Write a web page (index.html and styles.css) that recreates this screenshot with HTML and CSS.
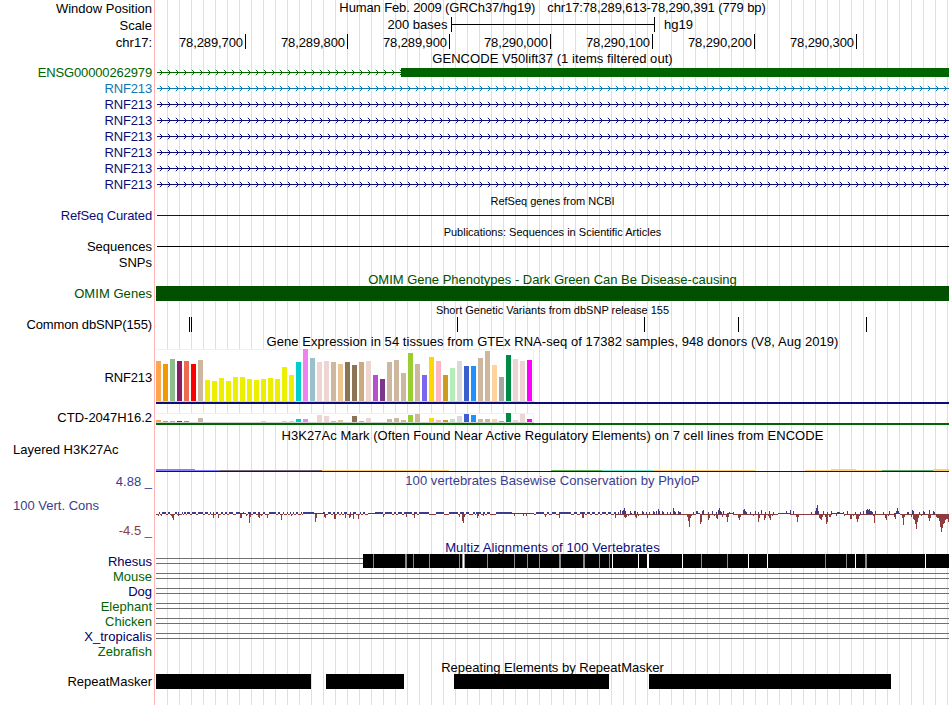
FILE: index.html
```html
<!DOCTYPE html>
<html lang="en">

<head>
  <meta charset="UTF-8">
  <meta name="viewport" content="width=device-width, initial-scale=1.0">
  <title>chr17:78,289,613-78,290,391</title>
  <link rel="stylesheet" href="styles.css">
</head>

<body>

  <svg class="defs">
    <defs>
      <pattern id="arrowGreen" class="green" width="8" height="16" patternUnits="userSpaceOnUse"><path class="arrow" d="M3.8 5.8l2.7 2.7l-2.7 2.7" /></pattern>
      <pattern id="arrowBlue" class="blue" width="8" height="16" patternUnits="userSpaceOnUse"><path class="arrow" d="M3.8 5.8l2.7 2.7l-2.7 2.7" /></pattern>
      <pattern id="arrowNavy" class="navy" width="8" height="16" patternUnits="userSpaceOnUse"><path class="arrow" d="M3.8 5.8l2.7 2.7l-2.7 2.7" /></pattern>
    </defs>
  </svg>

  <div class="browser">

    <!-- Position, scale and ruler -->
    <div class="row h17">
      <div class="label">Window Position</div>
      <div class="title position"><span>Human Feb. 2009 (GRCh37/hg19)</span><span>chr17:78,289,613-78,290,391 (779 bp)</span></div>
    </div>
    <div class="row h17">
      <div class="label">Scale</div>
      <svg class="plot" height="17">
        <text x="291.5" y="12" text-anchor="end">200 bases</text>
        <path class="line" d="M295.5 0v15M295 7.5h204M498.5 0v15" />
        <text x="508" y="12">hg19</text>
      </svg>
    </div>
    <div class="row h17">
      <div class="label">chr17:</div>
      <svg class="plot" height="17" id="ruler"></svg>
    </div>

    <!-- GENCODE -->
    <div class="title gencode">GENCODE V50lift37 (1 items filtered out)</div>
    <div class="row h16 green">
      <div class="label tight">ENSG00000262979</div>
      <svg class="plot" height="16">
        <path class="line" d="M1 8.5h245" />
        <rect width="245" height="16" fill="url(#arrowGreen)" />
        <rect class="fill" x="245" y="4" width="548" height="9" />
      </svg>
    </div>
    <div class="row h16 blue">
      <div class="label tight">RNF213</div>
      <svg class="plot" height="16"><path class="line" d="M1 8.5h792" /><rect width="793" height="16" fill="url(#arrowBlue)" /></svg>
    </div>
    <div class="row h16 navy">
      <div class="label tight">RNF213</div>
      <svg class="plot" height="16"><path class="line" d="M1 8.5h792" /><rect width="793" height="16" fill="url(#arrowNavy)" /></svg>
    </div>
    <div class="row h16 navy">
      <div class="label tight">RNF213</div>
      <svg class="plot" height="16"><path class="line" d="M1 8.5h792" /><rect width="793" height="16" fill="url(#arrowNavy)" /></svg>
    </div>
    <div class="row h16 navy">
      <div class="label tight">RNF213</div>
      <svg class="plot" height="16"><path class="line" d="M1 8.5h792" /><rect width="793" height="16" fill="url(#arrowNavy)" /></svg>
    </div>
    <div class="row h16 navy">
      <div class="label tight">RNF213</div>
      <svg class="plot" height="16"><path class="line" d="M1 8.5h792" /><rect width="793" height="16" fill="url(#arrowNavy)" /></svg>
    </div>
    <div class="row h16 navy">
      <div class="label tight">RNF213</div>
      <svg class="plot" height="16"><path class="line" d="M1 8.5h792" /><rect width="793" height="16" fill="url(#arrowNavy)" /></svg>
    </div>
    <div class="row h16 navy">
      <div class="label tight">RNF213</div>
      <svg class="plot" height="16"><path class="line" d="M1 8.5h792" /><rect width="793" height="16" fill="url(#arrowNavy)" /></svg>
    </div>

    <!-- RefSeq, publications, OMIM, dbSNP -->
    <div class="title small h16">RefSeq genes from NCBI</div>
    <div class="row h15 navy">
      <div class="label tight">RefSeq Curated</div>
      <svg class="plot" height="15"><path class="line" d="M1 7.5h792" /></svg>
    </div>
    <div class="title small h16">Publications: Sequences in Scientific Articles</div>
    <div class="row h15">
      <div class="label">Sequences</div>
      <svg class="plot" height="15"><path class="line" d="M1 7.5h792" /></svg>
    </div>
    <div class="row h16">
      <div class="label">SNPs</div>
    </div>
    <div class="title omim h16 low">OMIM Gene Phenotypes - Dark Green Can Be Disease-causing</div>
    <div class="row h15 omim">
      <div class="label wide">OMIM Genes</div>
      <svg class="plot" height="15"><rect class="fill" width="793" height="15" /></svg>
    </div>
    <div class="title small h16">Short Genetic Variants from dbSNP release 155</div>
    <div class="row h15">
      <div class="label tight">Common dbSNP(155)</div>
      <svg class="plot" height="15"><path class="line" d="M33.5 0v15M35.5 0v15M301.5 0v15M488.5 0v15M582.5 0v15M710.5 0v15" /></svg>
    </div>

    <!-- GTEx -->
    <div class="title h17 low wide">Gene Expression in 54 tissues from GTEx RNA-seq of 17382 samples, 948 donors (V8, Aug 2019)</div>
    <div class="row gtex">
      <div class="label tight">RNF213</div>
      <svg class="plot" height="55" id="gtexRnf"></svg>
    </div>
    <div class="row gtex-low">
      <div class="label">CTD-2047H16.2</div>
      <svg class="plot" height="12" id="gtexCtd"></svg>
    </div>

    <!-- H3K27Ac -->
    <div class="title h3k-title wide">H3K27Ac Mark (Often Found Near Active Regulatory Elements) on 7 cell lines from ENCODE</div>
    <div class="row h3k">
      <div class="label left">Layered H3K27Ac</div>
      <svg class="plot" height="30" id="h3k"></svg>
    </div>

    <!-- Conservation -->
    <div class="row h16 cons">
      <div class="label">4.88 _</div>
      <div class="title low wide">100 vertebrates Basewise Conservation by PhyloP</div>
    </div>
    <div class="row phylop cons">
      <div class="side">
        <div class="label left">100 Vert. Cons</div>
        <div class="label minimum">-4.5 _</div>
      </div>
      <svg class="plot" height="51" id="phylop"></svg>
    </div>
    <div class="title h14 navy multiz-title">Multiz Alignments of 100 Vertebrates</div>
    <div class="row h15 multiz">
      <div class="label">Rhesus</div>
      <svg class="plot" height="15" id="rhesus"></svg>
    </div>
    <div class="row h15 multiz alt">
      <div class="label">Mouse</div>
      <svg class="plot" height="15"><path class="gap" d="M0 4.5h793M0 9.5h793" /></svg>
    </div>
    <div class="row h15 multiz">
      <div class="label">Dog</div>
      <svg class="plot" height="15"><path class="gap" d="M0 4.5h793M0 9.5h793" /></svg>
    </div>
    <div class="row h15 multiz alt">
      <div class="label">Elephant</div>
      <svg class="plot" height="15"><path class="gap" d="M0 4.5h793M0 9.5h793" /></svg>
    </div>
    <div class="row h15 multiz alt">
      <div class="label">Chicken</div>
      <svg class="plot" height="15"><path class="gap" d="M0 4.5h793M0 9.5h793" /></svg>
    </div>
    <div class="row h15 multiz">
      <div class="label wide">X_tropicalis</div>
      <svg class="plot" height="15"><path class="gap" d="M0 4.5h793M0 9.5h793" /></svg>
    </div>
    <div class="row h15 multiz alt">
      <div class="label">Zebrafish</div>
    </div>

    <!-- RepeatMasker -->
    <div class="title h15">Repeating Elements by RepeatMasker</div>
    <div class="row h15">
      <div class="label">RepeatMasker</div>
      <svg class="plot" height="15"><path d="M0 0h155v15H0zM170 0h78v15h-78zM298 0h155v15h-155zM493 0h242v15H493z" /></svg>
    </div>
  </div>

  <script src="script.js"></script>
</body>

</html>
```

FILE: styles.css
```css
body {
  margin: 0;
  background: #fff;
  font-family: "Liberation Sans", Arial, sans-serif;
  font-size: 13px;
  color: #000;
}

.defs {
  display: block;
  width: 0;
  height: 0;
}

/* label column, red divider, then a guide line every 12px */
.browser {
  width: 949px;
  height: 705px;
  overflow: hidden;
  background:
    linear-gradient(to right, #fff 154px, #ffb4b4 154px, #ffb4b4 155px, #fff 155px) 0 0 / 156px 100% no-repeat,
    repeating-linear-gradient(to right, transparent 0, transparent 11px, #dcdcf8 11px, #dcdcf8 12px);
}

.row {
  display: flex;
  align-items: center;
}

.label {
  flex: none;
  box-sizing: border-box;
  width: 156px;
  padding-right: 4px;
  text-align: right;
  line-height: 15px;
  white-space: pre;
}

.label.left {
  padding-left: 13px;
  text-align: left;
}

.plot {
  display: block;
  flex: none;
  width: 793px;
  shape-rendering: crispEdges;
}

.plot text {
  fill: #000;
}

.title {
  margin-left: 156px;
  width: 793px;
  text-align: center;
  white-space: pre;
}

.row .title {
  margin-left: 0;
}

.position {
  display: flex;
  justify-content: center;
  gap: 12px;
  line-height: 15px;
  padding-bottom: 2px;
  box-sizing: border-box;
  letter-spacing: -0.12px;
}

.small {
  font-size: 11px;
}

.tight {
  letter-spacing: -0.14px;
}

.wide {
  letter-spacing: 0.05px;
}

#ruler {
  letter-spacing: -0.1px;
}

.h14 { height: 14px; line-height: 15px; }
.h15 { height: 15px; line-height: 17px; }
.h16 { height: 16px; line-height: 18px; }
.h17 { height: 17px; line-height: 18px; }

.low { line-height: 20px; }

.gencode {
  height: 13px;
  line-height: 16px;
  letter-spacing: 0.05px;
}

.green { color: #006400; }
.blue { color: #0c78b4; }
.navy { color: #0c0c78; }
.omim { color: #005000; }
.cons { color: #3c3c8c; }
.multiz { color: #000064; }
.alt { color: #006400; }

.line {
  fill: none;
  stroke: currentColor;
}

.fill {
  fill: currentColor;
}

.arrow {
  fill: none;
  stroke: currentColor;
  shape-rendering: auto;
}

.gap {
  fill: none;
  stroke: #707070;
}

.gtex {
  height: 55px;
}

.gtex .label {
  padding-top: 2px;
}

.gtex-low {
  height: 12px;
  margin-top: 9px;
}

.gtex-low .label {
  padding-bottom: 4px;
}

.h3k-title {
  margin-top: 4px;
  height: 14px;
  line-height: 13px;
}

.h3k {
  height: 30px;
  align-items: flex-start;
}

.h3k .label {
  line-height: 13px;
}

.phylop {
  height: 51px;
  align-items: flex-start;
}

.side {
  width: 156px;
  padding-top: 9px;
}

.minimum {
  margin-top: 10px;
  color: #8c3c3c;
}

.multiz-title {
  letter-spacing: 0.1px;
}
```

FILE: script.js
```js
const NS = 'http://www.w3.org/2000/svg';

function draw(id, tag, attrs, text) {
  const el = document.createElementNS(NS, tag);
  for (const key in attrs) el.setAttribute(key, attrs[key]);
  if (text) el.textContent = text;
  document.getElementById(id).appendChild(el);
}

function box(id, x, y, width, height, fill) {
  draw(id, 'rect', { x, y, width, height, fill });
}

// Ruler
const ticks = [[89, '78,289,700'], [191, '78,289,800'], [293, '78,289,900'], [394, '78,290,000'],
  [496, '78,290,100'], [598, '78,290,200'], [700, '78,290,300']];
ticks.forEach(([x, name]) => {
  draw('ruler', 'text', { x: x - 2, y: 13, 'text-anchor': 'end' }, name);
  box('ruler', x, 0, 1, 15, '#000');
});

// GTEx tissues
const tissueColors = ['#ffa54f', '#ee9a00', '#8fbc8f', '#8b1c62', '#ee6a50', '#ff0000', '#cdb79e']
  .concat(Array(13).fill('#eeee00'))
  .concat(['#00cdcd', '#ee82ee', '#9ac0cd', '#eed5d2', '#eed5d2', '#cdb79e', '#eec591', '#8b7355', '#8b7355',
    '#cdaa7d', '#eed5d2', '#b452cd', '#7a378b', '#cdb79e', '#cdb79e', '#cdb79e', '#9acd32', '#cdb79e',
    '#7a67ee', '#ffd700', '#ffb6c1', '#cd9b1d', '#b4eeb4', '#d9d9d9', '#3a5fcd', '#1e90ff', '#cdb79e',
    '#cdb79e', '#ffd39b', '#a6a6a6', '#008b45', '#eed5d2', '#eed5d2', '#ff00ff']);

const rnf = [40, 37, 42, 40, 40, 37, 41, 21, 20, 23, 20, 24, 24, 22, 21, 22, 23, 22, 34, 26, 39, 52, 43, 39, 40, 39, 37,
  39, 36, 39, 40, 26, 22, 39, 41, 28, 48, 37, 26, 44, 40, 26, 33, 40, 35, 35, 43, 50, 36, 24, 46, 42, 40, 41];
const ctd = [2, 1, 1, 1, 1, 0, 4, 0, 0, 0, 0, 0, 0, 0, 0, 1, 0, 0, 1, 1, 3, 3, 0, 7, 6, 1, 2,
  0, 6, 1, 4, 0, 0, 3, 4, 2, 7, 8, 0, 4, 2, 2, 3, 6, 8, 7, 3, 3, 3, 1, 9, 2, 8, 3];

function drawExpression(id, values, base, lineColor) {
  box(id, 0, 0, 378, base, '#f0f0f0');
  box(id, 0, 1, 377, base - 1, '#fff');
  box(id, 0, base, 378, 1, '#d0d0d0');
  values.forEach((v, i) => box(id, i * 7, base - v, 5, v, tissueColors[i]));
  box(id, 0, base + 1, 793, 2, lineColor);
}

drawExpression('gtexRnf', rnf, 52, '#0c0c78');
drawExpression('gtexCtd', ctd, 9, '#006400');

// H3K27Ac: x, width, height, color
const marks = [[0, 39, 2, '#8080ff'], [39, 25, 1, '#8080ff'], [64, 102, 1, '#806878'], [166, 127, 1, '#ffce70'],
  [395, 51, 1, '#68b858'], [446, 51, 1, '#70e8d0'], [497, 102, 1, '#ffce70'], [649, 26, 1, '#ffce70'],
  [675, 25, 2, '#ffce70'], [700, 26, 1, '#ffce70'], [726, 51, 1, '#68a878'], [777, 16, 2, '#ffce70']];
marks.forEach(([x, w, h, color]) => box('h3k', x, 25 - h, w, h, color));
box('h3k', 0, 25, 793, 1, '#141438');
document.getElementById('h3k').setAttribute('viewBox', '0 -3 793 30');

// PhyloP: positive runs (start, width) above the axis, everything else is slightly negative
const runs = [[3, 1], [6, 4], [12, 2], [19, 2], [22, 1], [26, 1], [28, 2], [31, 3], [36, 4], [42, 5], [49, 3], [54, 1],
  [57, 1], [60, 2], [65, 2], [69, 2], [73, 4], [80, 4], [87, 1], [92, 3], [97, 3], [102, 2], [107, 2], [113, 7],
  [122, 2], [127, 1], [131, 1], [134, 1], [137, 1], [140, 2], [145, 1], [147, 11], [167, 2], [172, 3], [177, 2],
  [181, 2], [185, 1], [188, 3], [194, 1], [197, 3], [204, 1], [207, 2], [219, 8], [229, 7], [238, 2], [242, 4],
  [248, 8], [258, 3], [263, 10], [280, 8], [293, 9], [304, 4], [310, 3], [317, 2], [320, 5], [327, 2], [331, 3],
  [340, 16], [380, 8], [391, 2], [396, 4], [403, 12], [418, 3], [424, 5], [431, 3], [436, 3], [442, 2], [446, 4],
  [452, 3], [458, 2]];
const thinRuns = [[84, 6], [158, 9], [212, 7], [356, 22], [540, 4], [571, 6], [622, 12], [676, 12], [738, 6]];
const up = [[462, 2], [464, 4], [466, 3], [467, 4], [468, 6], [469, 3], [474, 3], [475, 1], [478, 3], [479, 3], [481, 2],
  [486, 3], [487, 2], [490, 2], [493, 2], [497, 3], [498, 2], [500, 3], [502, 5], [503, 3], [506, 3], [507, 2],
  [511, 2], [514, 2], [517, 6], [518, 3], [519, 2], [522, 3], [523, 2], [524, 2], [537, 2], [540, 3], [541, 3],
  [546, 3], [547, 4], [552, 2], [556, 3], [560, 2], [562, 4], [563, 6], [564, 3], [565, 2], [567, 3], [573, 2],
  [577, 2], [587, 4], [588, 5], [589, 3], [590, 2], [594, 2], [599, 3], [602, 2], [605, 4], [609, 2], [613, 3],
  [617, 2], [630, 3], [634, 4], [637, 3], [655, 2], [659, 3], [660, 6], [661, 9], [662, 3], [667, 3], [671, 2],
  [675, 3], [681, 2], [682, 2], [683, 2], [687, 2], [691, 3], [699, 2], [704, 2], [707, 3], [710, 4], [711, 5],
  [712, 4], [713, 5], [714, 3], [715, 3], [716, 2], [719, 3], [727, 2], [733, 3], [740, 3], [741, 6], [742, 3],
  [751, 2], [752, 2], [756, 4], [757, 3], [763, 2], [767, 3], [768, 2], [773, 4], [777, 3], [778, 2]];
const down = [[2, 2], [5, 2], [15, 2], [16, 4], [17, 6], [22, 2], [57, 4], [62, 4], [84, 4], [85, 4], [90, 2], [93, 9],
  [94, 3], [102, 3], [103, 4], [105, 2], [111, 4], [125, 6], [135, 2], [159, 8], [160, 4], [168, 3], [169, 4],
  [178, 5], [179, 5], [189, 4], [193, 4], [194, 3], [197, 5], [202, 5], [227, 3], [250, 3], [258, 4], [303, 3],
  [306, 7], [307, 9], [308, 3], [321, 4], [322, 2], [327, 2], [358, 2], [367, 2], [370, 2], [389, 3], [403, 4],
  [426, 4], [427, 4], [459, 4], [468, 3], [469, 4], [470, 3], [472, 2], [479, 3], [480, 4], [482, 2], [491, 4],
  [531, 3], [532, 7], [533, 13], [534, 4], [535, 2], [544, 10], [545, 8], [552, 6], [553, 4], [558, 2],
  [560, 4], [561, 5], [566, 3], [570, 3], [571, 8], [572, 3], [582, 4], [583, 6], [584, 3], [597, 2], [602, 8],
  [603, 4], [608, 6], [609, 4], [612, 2], [613, 4], [614, 6], [616, 2], [640, 3], [641, 8], [642, 3],
  [663, 4], [664, 5], [665, 6], [666, 3], [669, 3], [670, 10], [671, 8], [673, 3], [674, 3], [680, 2], [688, 2],
  [694, 5], [695, 5], [697, 2], [700, 5], [701, 8], [702, 5], [703, 2], [717, 2], [718, 9], [729, 4], [730, 6],
  [732, 2], [738, 3], [739, 5], [746, 4], [747, 11], [748, 3], [755, 3], [757, 5], [758, 6], [759, 10],
  [760, 15], [761, 8], [762, 4], [765, 2], [772, 4], [773, 7], [774, 4], [780, 3], [781, 4],
  [782, 4], [783, 7], [784, 13], [785, 18], [786, 14], [787, 10], [788, 9], [789, 6], [790, 5], [791, 5], [792, 8]];

box('phylop', 0, 25, 793, 1, '#8c3c3c');
runs.forEach(([x, w]) => {
  box('phylop', x, 23, w, 2, '#3c3c8c');
  box('phylop', x, 25, w, 1, '#fff');
});
thinRuns.forEach(([x, w]) => {
  box('phylop', x, 24, w, 1, '#3c3c8c');
  box('phylop', x, 25, w, 1, '#fff');
});
up.forEach(([x, h]) => box('phylop', x, 25 - h, 1, h, '#3c3c8c'));
down.forEach(([x, h]) => box('phylop', x, 25, 1, h, '#8c3c3c'));

// Rhesus alignment with its gaps: x, width, color
draw('rhesus', 'path', { class: 'gap', d: 'M0 4.5h207M0 9.5h207' });
box('rhesus', 207, 0, 586, 14, '#000');
const gaps = [[217, 1, '#888'], [249, 2, '#888'], [257, 1, '#888'], [273, 1, '#888'], [303, 1, '#888'],
  [306, 3, '#999'], [307, 1, '#fff'], [331, 1, '#888'], [358, 1, '#888'], [371, 1, '#888'], [383, 1, '#888'],
  [403, 2, '#888'], [427, 2, '#888'], [443, 1, '#888'], [453, 1, '#888'], [456, 1, '#fff'], [482, 1, '#fff'],
  [491, 2, '#fff'], [526, 1, '#fff'], [545, 1, '#888'], [571, 1, '#888'], [592, 1, '#fff'], [611, 1, '#fff'],
  [669, 1, '#888'], [690, 1, '#888'], [699, 1, '#fff'], [709, 2, '#888'], [769, 1, '#fff']];
gaps.forEach(([x, w, color]) => box('rhesus', x, 0, w, 14, color));
```
